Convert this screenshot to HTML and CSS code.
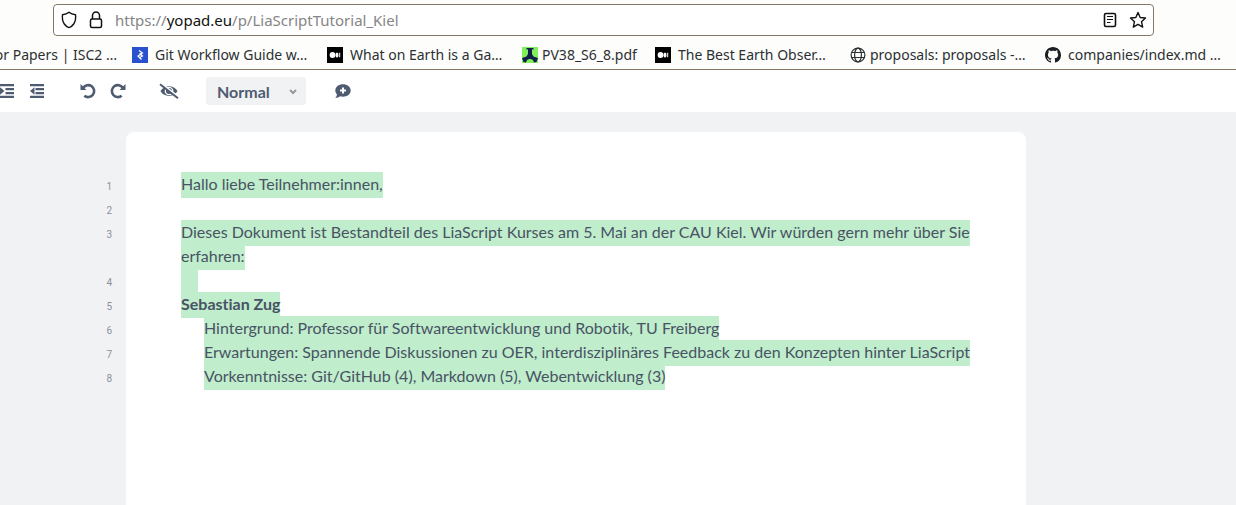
FILE: index.html
```html
<!DOCTYPE html>
<html lang="de">
<head>
<meta charset="utf-8">
<title>LiaScriptTutorial_Kiel</title>
<link rel="stylesheet" href="styles.css">
</head>
<body>
<header class="browser">
  <div class="address">
    <button class="plain" aria-label="Tracking protection"><svg width="16" height="18" viewBox="0 0 16 18" fill="none" stroke="#111" stroke-width="1.4" stroke-linejoin="round"><path d="M8 1.2C6.200 2.700 3.800 3.500 1.500 3.700C1 7.500 1.600 10.500 3.300 13C4.600 15 6.200 16 8 16.600C9.800 16 11.400 15 12.700 13C14.400 10.500 15 7.500 14.500 3.700C12.200 3.500 9.800 2.700 8 1.200Z"/></svg></button>
    <button class="plain" aria-label="Connection secure"><svg width="14" height="18" viewBox="0 0 14 18" fill="none" stroke="#111" stroke-width="1.5"><rect x="1.500" y="8" width="11" height="8.500" rx="1.500"/><path d="M3.500 8V4.500a3.500 3.500 0 0 1 7 0V8"/></svg></button>
    <div class="url">https://<span class="host">yopad.eu</span>/p/LiaScriptTutorial_Kiel</div>
    <button class="plain" aria-label="Reader view"><svg width="14" height="16" viewBox="0 0 14 16" fill="none" stroke="#111" stroke-width="1.600"><rect x="1.500" y="1.500" width="11" height="13" rx="1.500"/><path d="M4 4.500h6M4 7.500h6M4 10.500h3.500" stroke-width="1.200"/></svg></button>
    <button class="plain" aria-label="Bookmark this page"><svg width="18" height="18" viewBox="0 0 18 18" fill="none" stroke="#111" stroke-width="1.400" stroke-linejoin="round"><path d="M9 1.500l2.200 5 5.300.5-4 3.700 1.200 5.400L9 13.300l-4.700 2.800 1.200-5.400-4-3.700 5.300-.5z"/></svg></button>
  </div>
  <nav class="bookmarks">
    <a class="mark first" href="#">or Papers | ISC2 …</a>
    <a class="mark" href="#"><svg width="16" height="16" viewBox="0 0 16 16"><path fill="#2850cf" d="M0 0h16v16H0z"/><path d="M7 3.500l3.500 2.500L6 9l3.500 3.500M7.500 6.500l3 2.500L7 11" fill="none" stroke="#fff" stroke-width="1.200"/></svg>Git Workflow Guide w…</a>
    <a class="mark" href="#"><svg width="16" height="16" viewBox="0 0 16 16"><path d="M0 0h16v16H0z"/><circle cx="5.500" cy="8" r="2.900" fill="#fff"/><ellipse cx="10" cy="8" rx="1.500" ry="2.600" fill="#fff"/><path d="M12.700 5.700v4.600" stroke="#fff"/></svg>What on Earth is a Ga…</a>
    <a class="mark short" href="#"><svg width="16" height="16" viewBox="0 0 16 16"><path fill="#7ff05c" d="M0 0h16v16H0z"/><path fill="#122049" d="M4.500 1h7v1.500H10V7l1.500 2.500L16 11l-1.500 4-2.500.5c-.5-2.500-2-3.500-4-3.500s-3.500 1-4 3.500L1.500 15 0 11l4.500-1.500L6 7V2.500H4.500z"/></svg>PV38_S6_8.pdf</a>
    <a class="mark" href="#"><svg width="16" height="16" viewBox="0 0 16 16"><path d="M0 0h16v16H0z"/><circle cx="5.500" cy="8" r="2.900" fill="#fff"/><ellipse cx="10" cy="8" rx="1.500" ry="2.600" fill="#fff"/><path d="M12.700 5.700v4.600" stroke="#fff"/></svg>The Best Earth Obser…</a>
    <a class="mark tight" href="#"><svg width="16" height="16" viewBox="0 0 16 16" fill="none" stroke="#2c3033" stroke-width="1.200"><circle cx="8" cy="8" r="6.900"/><ellipse cx="8" cy="8" rx="3.400" ry="6.900"/><path d="M1.500 5.500h13M1.500 10.500h13"/></svg>proposals: proposals -…</a>
    <a class="mark" href="#"><svg width="16" height="16" viewBox="0 0 16 16" fill="#1b1f23"><path d="M8 0C3.580 0 0 3.580 0 8c0 3.540 2.290 6.530 5.470 7.590.4.070.55-.17.55-.38 0-.19-.01-.82-.01-1.490-2.010.37-2.530-.49-2.690-.94-.09-.23-.48-.94-.82-1.130-.28-.15-.68-.52-.01-.53.63-.01 1.080.58 1.230.82.72 1.210 1.870.87 2.330.66.07-.52.28-.87.51-1.070-1.780-.2-3.640-.89-3.640-3.950 0-.87.31-1.590.82-2.150-.08-.2-.36-1.020.08-2.120 0 0 .67-.21 2.200.82.64-.18 1.320-.27 2-.27s1.360.09 2 .27c1.530-1.040 2.200-.82 2.200-.82.44 1.100.16 1.920.08 2.120.51.56.82 1.270.82 2.150 0 3.070-1.870 3.750-3.650 3.950.29.25.54.73.54 1.480 0 1.070-.01 1.930-.01 2.200 0 .21.15.46.55.38A8.010 8.010 0 0 0 16 8c0-4.420-3.580-8-8-8z"/></svg>companies/index.md …</a>
  </nav>
</header>
<div class="toolbar">
  <button class="plain" aria-label="Indent"><svg width="15" height="16" viewBox="0 0 15 16" fill="#4f5b70"><path d="M0 1h14v2.300H0zM5.500 5h8.500v2.200H5.500zM5.500 9h8.500v2.200H5.500zM0 12.800h14v2.200H0zM0 4.200l4.500 3.800L0 11.800z"/></svg></button>
  <button class="plain outdent" aria-label="Outdent"><svg width="15" height="16" viewBox="0 0 15 16" fill="#4f5b70"><path d="M0 1h14v2.300H0zM5.500 5h8.500v2.200H5.500zM5.500 9h8.500v2.200H5.500zM0 12.800h14v2.200H0zM4.500 4.200L0 8l4.500 3.800z"/></svg></button>
  <button class="plain undo" aria-label="Undo"><svg width="16" height="16" viewBox="0 0 16 16"><path d="M3.200 4.700A6 6 0 1 1 4.300 12.700" fill="none" stroke="#4f5b70" stroke-width="2.600"/><path d="M.500 1v6h6z" fill="#4f5b70"/></svg></button>
  <button class="plain redo" aria-label="Redo"><svg width="16" height="16" viewBox="0 0 16 16"><path d="M12.800 4.700A6 6 0 1 0 11.700 12.700" fill="none" stroke="#4f5b70" stroke-width="2.600"/><path d="M15.500 1v6h-6z" fill="#4f5b70"/></svg></button>
  <button class="plain authors" aria-label="Clear authorship colors"><svg width="20" height="16" viewBox="0 0 20 16"><path d="M1.500 8C5 1.500 15 1.500 18.500 8C15 14.500 5 14.500 1.500 8z" fill="#4f5b70"/><circle cx="10" cy="8" r="3.700" fill="none" stroke="#fff" stroke-width="1.300"/><path d="M1.500 0L20 14.300" stroke="#fff" stroke-width="2"/><path d="M1 1.200l18 14" stroke="#4f5b70" stroke-width="2"/></svg></button>
  <div class="style">
    <select class="style-select" aria-label="Text style"><option>Normal</option></select>
    <svg class="chevron" width="8" height="6" viewBox="0 0 8 6"><path d="M1 1l3 3 3-3" fill="none" stroke="#999" stroke-width="2"/></svg>
  </div>
  <button class="plain comment" aria-label="Add comment"><svg width="16" height="14" viewBox="0 0 16 14"><path d="M8 .3c4.300 0 7.700 2.700 7.700 6.200S12.300 12.700 8 12.700c-1 0-2-.2-2.900-.5C3.900 13.200 2.200 13.800.300 13.800c1-1.100 1.600-2.300 1.700-3.400C.900 9.300.300 8 .300 6.500.300 3 3.700.300 8 .300z" fill="#4f5b70"/><path d="M8 3.500v6M5 6.500h6" stroke="#fff" stroke-width="2"/></svg></button>
</div>
<main class="workspace">
  <div class="gutter"><span>1</span><span>2</span><span class="two-lines">3</span><span>4</span><span>5</span><span>6</span><span>7</span><span>8</span></div>
  <article class="paper">
    <p><mark>Hallo liebe Teilnehmer:innen,</mark></p>
    <p><br></p>
    <p><mark>Dieses Dokument ist Bestandteil des LiaScript Kurses am 5. Mai an der CAU Kiel. Wir würden gern mehr über Sie<br>erfahren:</mark></p>
    <p><mark class="blank"></mark></p>
    <p><mark><b>Sebastian Zug</b></mark></p>
    <p class="indent"><mark>Hintergrund: Professor für Softwareentwicklung und Robotik, TU Freiberg</mark></p>
    <p class="indent"><mark>Erwartungen: Spannende Diskussionen zu OER, interdisziplinäres Feedback zu den Konzepten hinter LiaScript</mark></p>
    <p class="indent"><mark>Vorkenntnisse: Git/GitHub (4), Markdown (5), Webentwicklung (3)</mark></p>
  </article>
</main>
</body>
</html>
```
FILE: styles.css
```css
* { box-sizing: border-box; }
body {
  margin: 0;
  min-height: 100vh;
  display: flex;
  flex-direction: column;
  overflow-x: hidden;
  background: #f1f2f4;
  font-family: "Noto Sans", "Open Sans", sans-serif;
}
svg { display: block; flex: none; }
.plain { padding: 0; border: 0; background: none; flex: none; }
.browser { background: #fdfdfb; border-bottom: 1px solid #86776b; padding-top: 4px; }
.address {
  display: flex;
  align-items: center;
  gap: 12px;
  height: 32px;
  margin: 0 82px 0 53px;
  padding: 0 6px 0 7px;
  border: 1px solid #86776b;
  border-radius: 4px;
  background: #fff;
  font-size: 15px;
}
.url { flex: 1; color: #858585; white-space: nowrap; }
.host { color: #111; }
.bookmarks { display: flex; align-items: center; height: 33px; padding-top: 5px; overflow: hidden; }
.mark {
  display: flex;
  align-items: center;
  gap: 7px;
  flex: 0 0 195px;
  min-width: 0;
  color: #2c3033;
  font-size: 14px;
  line-height: 20px;
  text-decoration: none;
  white-space: nowrap;
}
.first { flex-basis: 132px; justify-content: flex-end; padding-right: 15px; }
.short { flex-basis: 133px; gap: 4px; }
.tight { gap: 4px; }
.toolbar { display: flex; align-items: center; height: 42px; background: #fff; }
.outdent { margin-left: 15px; }
.undo { margin-left: 35px; }
.redo { margin-left: 14px; }
.authors { margin-left: 33px; }
.style { position: relative; margin-left: 27px; width: 100px; }
.style-select {
  appearance: none;
  display: block;
  width: 100%;
  height: 28px;
  padding: 0 11px;
  border: 0;
  border-radius: 3px;
  background: #f1f2f4;
  color: #4f5b70;
  font: bold 16px Lato, sans-serif;
}
.chevron { position: absolute; right: 9px; top: 12px; pointer-events: none; }
.comment { margin-left: 29px; }
.workspace { display: flex; flex: 1; padding-top: 20px; }
.gutter {
  display: flex;
  flex-direction: column;
  flex: 0 0 126px;
  padding: 43px 14px 0 0;
  color: #8a919d;
  font: 10px/24px Roboto, sans-serif;
  text-align: right;
}
.two-lines { height: 48px; }
.paper {
  flex: 0 1 900px;
  padding: 40px 55px;
  border-radius: 8px 8px 0 0;
  background: #fff;
  color: #485365;
  font: 16px/24px Lato, sans-serif;
  font-variant-ligatures: none;
}
.paper p { margin: 0; min-height: 24px; white-space: nowrap; }
.paper .indent { padding-left: 23px; }
.paper mark { padding: 2px 0 5px; background: #c0edcb; color: inherit; }
.paper .blank { display: block; width: 17px; height: 24px; }
```
